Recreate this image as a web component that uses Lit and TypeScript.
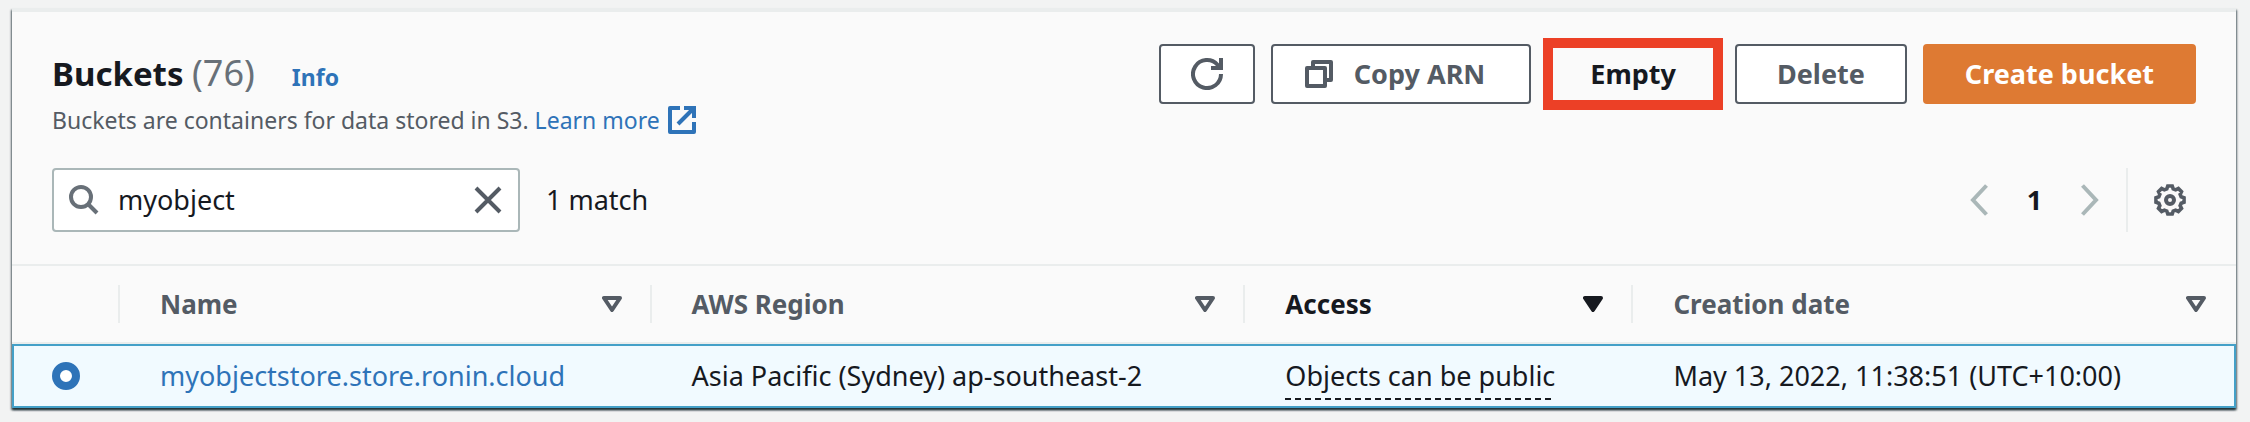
import { LitElement, html, css, svg } from "lit";
import { customElement, property, state } from "lit/decorators.js";
import { classMap } from "lit/directives/class-map.js";

interface Column {
  key: string;
  label: string;
}

interface Bucket {
  name: string;
  region: string;
  access: string;
  created: string;
}

const COLUMNS: Column[] = [
  { key: "name", label: "Name" },
  { key: "region", label: "AWS Region" },
  { key: "access", label: "Access" },
  { key: "date", label: "Creation date" },
];

const BUCKETS: Bucket[] = [
  {
    name: "myobjectstore.store.ronin.cloud",
    region: "Asia Pacific (Sydney) ap-southeast-2",
    access: "Objects can be public",
    created: "May 13, 2022, 11:38:51 (UTC+10:00)",
  },
];

// Outline of the settings cog: eight flat teeth round a 32-unit box.
const cogPath = (() => {
  const points: string[] = [];
  for (let i = 0; i < 8; i++) {
    const at = (radius: number, offset: number) => {
      const angle = ((i * 45 + offset - 90) * Math.PI) / 180;
      return `${(16 + radius * Math.cos(angle)).toFixed(2)} ${(16 + radius * Math.sin(angle)).toFixed(2)}`;
    };
    points.push(at(11.6, -16), at(14.2, -9), at(14.2, 9), at(11.6, 16));
  }
  return `M${points.join("L")}Z`;
})();

const ICONS: Record<string, { box: string; body: unknown }> = {
  refresh: {
    box: "0 0 32 32",
    body: svg`<path d="M30 16A14 14 0 1 1 26.5 6.8L29 10" stroke-width="4"/><path d="M30 0V10H20" stroke-width="4"/>`,
  },
  copy: {
    box: "0 0 28 28",
    body: svg`<path d="M8 6V2H26V20H22" stroke-width="4" stroke-linejoin="round"/><rect x="2" y="8" width="18" height="18" stroke-width="4" stroke-linejoin="round"/>`,
  },
  external: {
    box: "0 0 28 28",
    body: svg`<path d="M12 2H2V26H26V16" stroke-width="4" stroke-linejoin="round"/><path d="M16 2H26V12" stroke-width="4"/><path d="M10 18L25 3" stroke-width="4"/>`,
  },
  search: {
    box: "0 0 30 30",
    body: svg`<circle cx="12" cy="12" r="10" stroke-width="4"/><path d="M19 19L28 28" stroke-width="4"/>`,
  },
  close: {
    box: "0 0 28 28",
    body: svg`<path d="M2 2L26 26M26 2L2 26" stroke-width="4"/>`,
  },
  previous: {
    box: "0 0 18 32",
    body: svg`<path d="M16.5 1.5L3 16L16.5 30.5" stroke-width="4"/>`,
  },
  next: {
    box: "0 0 18 32",
    body: svg`<path d="M1.5 1.5L15 16L1.5 30.5" stroke-width="4"/>`,
  },
  settings: {
    box: "0 0 32 32",
    body: svg`<path d=${cogPath} stroke-width="3.6"/><circle cx="16" cy="16" r="4" stroke-width="4"/>`,
  },
  sort: {
    box: "0 0 20 16",
    body: svg`<path d="M2 2H18L10 14Z" stroke-width="4" stroke-linejoin="round"/>`,
  },
  sorted: {
    box: "0 0 20 16",
    body: svg`<path d="M2 2H18L10 14Z" stroke-width="4" stroke-linejoin="round" fill="currentColor"/>`,
  },
};

@customElement("ui-icon")
class UiIcon extends LitElement {
  static styles = css`
    :host {
      display: inline-flex;
      flex: none;
    }
    .glyph {
      display: block;
      fill: none;
      stroke: currentColor;
    }
  `;

  @property() name = "";

  render() {
    const icon = ICONS[this.name];
    const [, , width, height] = icon.box.split(" ");
    return html`<svg class="glyph" width=${width} height=${height} viewBox=${icon.box} aria-hidden="true">${icon.body}</svg>`;
  }
}

@customElement("app-root")
class AppRoot extends LitElement {
  static styles = css`
    :host {
      display: block;
      box-sizing: border-box;
      min-height: 100vh;
      padding: 8px 14px 14px 12px;
      background: #f2f3f3;
      color: #16191f;
      font: 27px/36px "Noto Sans", "Open Sans", sans-serif;
    }
    * {
      box-sizing: border-box;
    }
    button,
    input {
      font: inherit;
      color: inherit;
      margin: 0;
    }
    button {
      display: inline-flex;
      align-items: center;
      justify-content: center;
      padding: 0;
      border: 0;
      background: none;
      cursor: pointer;
      white-space: nowrap;
    }
    a {
      color: #2e73b8;
      text-decoration: none;
    }
    .card {
      border-top: 4px solid #eaeded;
      background: #fafafa;
      box-shadow:
        0 2px 2px 0 rgba(0, 20, 28, 0.6),
        1px 2px 2px 0 rgba(0, 28, 36, 0.45),
        -1px 2px 2px 0 rgba(0, 28, 36, 0.45);
    }
    .head {
      display: flex;
      justify-content: space-between;
      align-items: flex-start;
      padding: 32px 40px 0;
    }
    .intro {
      display: grid;
      gap: 8px;
      padding-top: 8px;
    }
    .title {
      display: flex;
      align-items: baseline;
      height: 44px;
      line-height: 44px;
    }
    .heading {
      margin: 0;
      font-size: 33px;
      font-weight: 700;
    }
    .count {
      font-size: 36px;
      font-weight: 400;
      line-height: 36px;
      color: #687078;
    }
    .info {
      margin-left: 37px;
      font-size: 23px;
      font-weight: 700;
    }
    .lead {
      display: flex;
      margin: 0;
      font-size: 23px;
      line-height: 32px;
      color: #545b64;
      white-space: pre;
    }
    .learn {
      display: inline-flex;
      align-items: center;
      gap: 8px;
    }
    .actions {
      display: flex;
      align-items: center;
      gap: 16px;
      font-weight: 700;
    }
    .btn {
      height: 60px;
      padding: 0 40px;
      border: 2px solid #545b64;
      border-radius: 4px;
      background: #fff;
      color: #545b64;
    }
    .square {
      padding: 0 30px;
    }
    .with-icon {
      gap: 21px;
      padding: 0 44px 0 32px;
    }
    .marked {
      height: 72px;
      margin: -6px -4px;
      padding: 0 37px;
      border: 10px solid #ec4026;
      border-radius: 0;
      background: #fafafa;
      color: #16191f;
    }
    .primary {
      border-color: #de7a33;
      background: #de7a33;
      color: #fff;
    }
    .tools {
      display: flex;
      justify-content: space-between;
      padding: 32px 40px;
    }
    .filter {
      display: flex;
      align-items: center;
      gap: 26px;
    }
    .search {
      display: flex;
      align-items: center;
      gap: 19px;
      width: 468px;
      height: 64px;
      padding: 0 16px 0 15px;
      border: 2px solid #aab7b8;
      border-radius: 4px;
      background: #fff;
      color: #687078;
    }
    .query {
      flex: 1;
      min-width: 0;
      padding: 0;
      border: 0;
      outline: 0;
      background: none;
      color: #16191f;
    }
    .clear {
      color: #545b64;
    }
    .paging {
      display: flex;
      align-items: center;
      color: #aab7b8;
    }
    .page {
      width: 93px;
      color: #16191f;
      font-weight: 700;
    }
    .prefs {
      height: 64px;
      margin-left: 27px;
      padding: 0 10px 0 26px;
      border-left: 2px solid #eaeded;
      color: #545b64;
    }
    .table {
      width: 100%;
      table-layout: fixed;
      border-collapse: separate;
      border-spacing: 0;
      border-top: 2px solid #eaeded;
    }
    .col-select {
      width: 108px;
    }
    .col-name {
      width: 23.9%;
    }
    .col-region {
      width: 26.7%;
    }
    .col-access {
      width: 17.45%;
    }
    th {
      height: 78px;
      padding: 0;
      border-bottom: 2px solid #eaeded;
      text-align: left;
    }
    .sorter {
      display: flex;
      justify-content: space-between;
      width: calc(100% + 2px);
      height: 38px;
      margin-left: -2px;
      padding: 0 30px 0 40px;
      border-left: 2px solid #eaeded;
      font-size: 26px;
      font-weight: 700;
      color: #545b64;
    }
    .active {
      color: #16191f;
    }
    td {
      height: 64px;
      padding: 0 0 0 40px;
      border: solid #44a0c8;
      border-width: 2px 0;
      background: #f1faff;
      white-space: nowrap;
    }
    td:first-child {
      padding-left: 38px;
      border-left-width: 2px;
    }
    td:last-child {
      border-right-width: 2px;
    }
    .radio {
      display: block;
      appearance: none;
      width: 28px;
      height: 28px;
      border: 2px solid #aab7b8;
      border-radius: 50%;
      background: #fff;
    }
    .radio:checked {
      border: 8px solid #2e73b8;
    }
    .hint {
      display: inline-block;
      height: 42px;
      margin-top: 6px;
      background: repeating-linear-gradient(90deg, #16191f 0 6px, transparent 6px 10px) bottom / 100% 2px no-repeat;
      vertical-align: middle;
    }
  `;

  @state() private query = "myobject";
  @state() private sortKey = "access";
  @state() private selected = BUCKETS[0].name;

  private renderHeader(column: Column) {
    const active = column.key === this.sortKey;
    return html`<th scope="col">
      <button class=${classMap({ sorter: true, active })} @click=${() => (this.sortKey = column.key)}>
        ${column.label}<ui-icon name=${active ? "sorted" : "sort"}></ui-icon>
      </button>
    </th>`;
  }

  private renderRow(bucket: Bucket) {
    return html`<tr>
      <td>
        <input
          class="radio"
          type="radio"
          name="bucket"
          aria-label=${bucket.name}
          .checked=${bucket.name === this.selected}
          @change=${() => (this.selected = bucket.name)}
        />
      </td>
      <td><a href="#bucket">${bucket.name}</a></td>
      <td>${bucket.region}</td>
      <td><span class="hint">${bucket.access}</span></td>
      <td>${bucket.created}</td>
    </tr>`;
  }

  render() {
    const rows = BUCKETS.filter((bucket) => bucket.name.includes(this.query));
    return html`
      <section class="card">
        <header class="head">
          <div class="intro">
            <div class="title">
              <h2 class="heading">Buckets <span class="count">(76)</span></h2>
              <a class="info" href="#info">Info</a>
            </div>
            <p class="lead">Buckets are containers for data stored in S3. <a class="learn" href="#learn">Learn more<ui-icon name="external"></ui-icon></a></p>
          </div>
          <div class="actions">
            <button class="btn square" aria-label="Refresh"><ui-icon name="refresh"></ui-icon></button>
            <button class="btn with-icon"><ui-icon name="copy"></ui-icon>Copy ARN</button>
            <button class="btn marked">Empty</button>
            <button class="btn">Delete</button>
            <button class="btn primary">Create bucket</button>
          </div>
        </header>
        <div class="tools">
          <div class="filter">
            <div class="search">
              <ui-icon name="search"></ui-icon>
              <input
                class="query"
                type="text"
                aria-label="Find buckets by name"
                .value=${this.query}
                @input=${(event: InputEvent) => (this.query = (event.target as HTMLInputElement).value)}
              />
              <button class="clear" aria-label="Clear" @click=${() => (this.query = "")}>
                <ui-icon name="close"></ui-icon>
              </button>
            </div>
            <span>${rows.length} match${rows.length === 1 ? "" : "es"}</span>
          </div>
          <nav class="paging" aria-label="Pages">
            <button aria-label="Previous page"><ui-icon name="previous"></ui-icon></button>
            <button class="page" aria-current="page">1</button>
            <button aria-label="Next page"><ui-icon name="next"></ui-icon></button>
            <button class="prefs" aria-label="Preferences"><ui-icon name="settings"></ui-icon></button>
          </nav>
        </div>
        <table class="table">
          <colgroup>
            <col class="col-select" />
            <col class="col-name" />
            <col class="col-region" />
            <col class="col-access" />
            <col />
          </colgroup>
          <thead>
            <tr>
              <th scope="col" aria-label="Selection"></th>
              ${COLUMNS.map((column) => this.renderHeader(column))}
            </tr>
          </thead>
          <tbody>
            ${rows.map((bucket) => this.renderRow(bucket))}
          </tbody>
        </table>
      </section>
    `;
  }
}
